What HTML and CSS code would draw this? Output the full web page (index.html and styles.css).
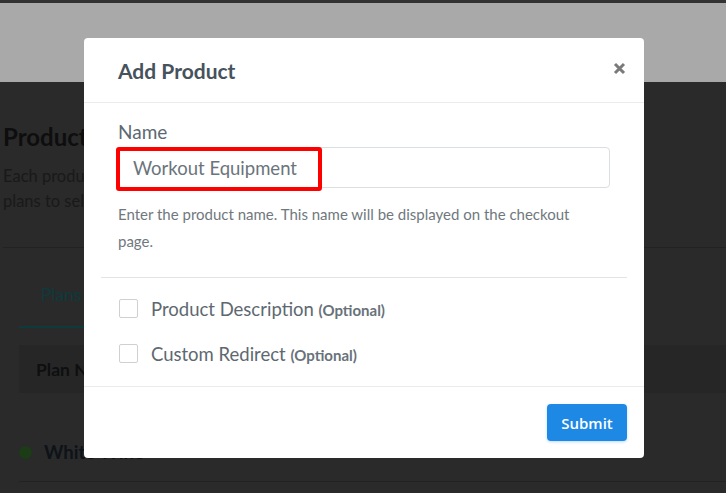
FILE: index.html
```html
<!DOCTYPE html>
<html lang="en">
<head>
<meta charset="utf-8">
<title>Add Product</title>
<link rel="stylesheet" href="styles.css">
</head>
<body>
<div class="topstrip"></div>
<header class="topbar"></header>
<main class="page">
  <h1 class="page-title">Products</h1>
  <p class="page-desc">Each product<br>plans to sell</p>
  <div class="page-rule"></div>
  <section class="plans">
    <nav class="tabs"><span class="tab active">Plans</span></nav>
    <div class="table-head"><span class="th">Plan Name</span></div>
    <div class="table-row">
      <span class="dot"></span>
      <span class="plan-name">White Wine</span>
      <span class="plan-price">Dec 2019</span>
    </div>
  </section>
</main>

<div class="modal">
  <div class="modal-header">
    <h2 class="modal-title">Add Product</h2>
    <svg class="close" width="13" height="13" viewBox="0 0 13 13"><path d="M2 2 L11 11 M11 2 L2 11" stroke="#7a7a7a" stroke-width="3" stroke-linecap="butt"/></svg>
  </div>
  <div class="modal-body">
    <div class="field">
      <label class="field-label">Name</label>
      <div class="input-wrap">
        <div class="input">Workout Equipment</div>
        <div class="highlight"></div>
      </div>
      <p class="help">Enter the product name. This name will be displayed on the checkout page.</p>
    </div>
    <div class="checks">
      <div class="check-row"><span class="box"></span><span class="check-label">Product Description <small>(Optional)</small></span></div>
      <div class="check-row"><span class="box"></span><span class="check-label">Custom Redirect <small>(Optional)</small></span></div>
    </div>
  </div>
  <div class="modal-footer">
    <button class="submit">Submit</button>
  </div>
</div>
</body>
</html>
```

FILE: styles.css
```css
* { box-sizing: border-box; }
html, body { margin: 0; padding: 0; }
body {
  width: 726px;
  height: 493px;
  overflow: hidden;
  background: #2a2a2a;
  font-family: "Lato", "Liberation Sans", sans-serif;
  position: relative;
}
.topstrip { height: 3px; background: #323232; }
.topbar { height: 79px; background: #a9a9a9; }

.page { padding: 0 0 0 3px; }
.page-title {
  margin: 40px 0 0;
  font-size: 24px;
  line-height: 30px;
  font-weight: 700;
  color: #0e0e0f;
}
.page-desc {
  margin: 12px 0 0;
  font-size: 16.5px;
  line-height: 25px;
  color: #191919;
}
.page-rule { margin-top: 33px; height: 1px; background: #222; }
.plans { padding-left: 16px; }
.tabs { display: flex; }
.tab {
  padding: 35px 22px 19px;
  font-size: 17.5px;
  line-height: 24px;
  color: #0c3a3d;
  border-bottom: 2px solid #0c3a3d;
}
.table-head {
  margin-top: 17px;
  height: 48px;
  background: #262626;
  display: flex;
  align-items: center;
  padding-left: 17px;
}
.th { font-weight: 700; font-size: 17.5px; color: #0e0f10; }
.table-row {
  display: flex;
  align-items: center;
  padding: 47px 0 17px;
  border-bottom: 1px solid #222;
  line-height: 24px;
}
.dot { width: 13px; height: 13px; border-radius: 50%; background: #1c3b17; }
.plan-name { margin-left: 12px; font-size: 18.5px; color: #0d1318; font-weight: 700; }
.plan-price { margin-left: 345px; font-size: 17.5px; color: #0d1318; font-weight: 700; }

.modal {
  position: absolute;
  left: 84px;
  top: 38px;
  width: 560px;
  background: #fff;
  border-radius: 4px;
}
.modal-header {
  height: 65px;
  padding: 0 18px 0 34px;
  display: flex;
  align-items: center;
  justify-content: space-between;
  border-bottom: 1px solid #ebebeb;
}
.modal-title {
  margin: 0;
  font-size: 21px;
  font-weight: 700;
  color: #46525c;
}
.close { display: block; margin-top: -4px; }
.modal-body { padding: 0 17px; }
.field { padding: 19px 17px 22px; border-bottom: 1px solid #e4e4e4; }
.field-label {
  display: block;
  font-size: 19px;
  line-height: 20px;
  color: #5d6972;
}
.input-wrap { position: relative; margin-top: 5px; }
.input {
  height: 41px;
  border: 1px solid #dadde1;
  border-radius: 4px;
  padding-left: 14px;
  display: flex;
  align-items: center;
  font-size: 18.5px;
  color: #6a747b;
}
.highlight {
  position: absolute;
  left: -2px;
  top: 0;
  width: 206px;
  height: 44px;
  border: 4px solid #ff0000;
  border-radius: 3px;
}
.help {
  margin: 13px 0 0;
  max-width: 470px;
  font-size: 15px;
  line-height: 27px;
  color: #70787e;
}
.checks {
  padding: 18px 17px 20px;
  display: flex;
  flex-direction: column;
  gap: 20px;
}
.check-row { display: flex; align-items: center; height: 25px; }
.box {
  width: 19px;
  height: 19px;
  margin-left: 1px;
  border: 1.5px solid #d0d0d0;
  border-radius: 2px;
}
.check-label {
  margin-left: 13px;
  font-size: 18.5px;
  color: #5d6870;
}
.check-label small { font-size: 15px; font-weight: 700; color: #68727a; }
.modal-footer {
  border-top: 1px solid #ebebeb;
  padding: 17px;
  display: flex;
  justify-content: flex-end;
}
.submit {
  width: 80px;
  height: 37px;
  border: none;
  border-radius: 4px;
  background: #1e88e5;
  color: #fff;
  font-family: "Open Sans", "Noto Sans", sans-serif;
  font-size: 15px;
  font-weight: 600;
  box-shadow: 0 1px 3px rgba(30, 136, 229, 0.3);
}
```
